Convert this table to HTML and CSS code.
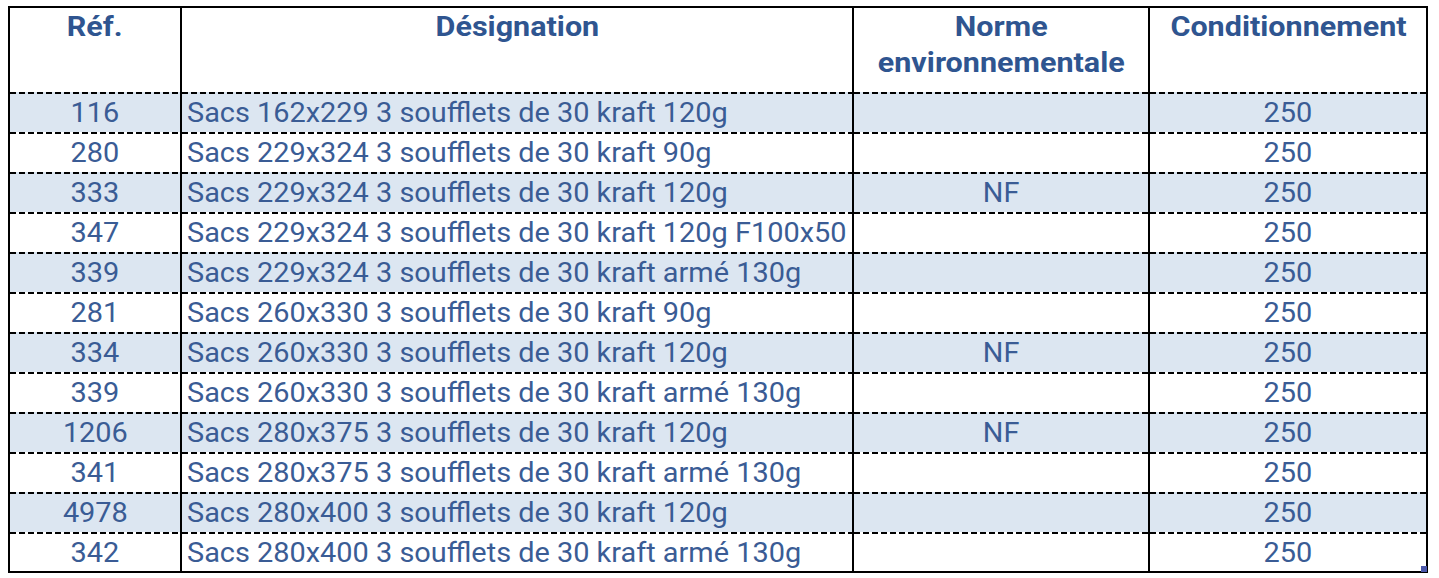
FILE: index.html
```html
<!DOCTYPE html>
<html lang="fr">
<head>
<meta charset="utf-8">
<title>Sacs 3 soufflets</title>
<link rel="stylesheet" href="styles.css">
</head>
<body>
<div class="wrap">
<table class="grid">
  <colgroup>
    <col class="c-ref"><col class="c-des"><col class="c-norme"><col class="c-cond">
  </colgroup>
  <thead>
    <tr>
      <th><span class="t">Réf.</span></th>
      <th><span class="t">Désignation</span></th>
      <th><span class="t">Norme<br>environnementale</span></th>
      <th><span class="t">Conditionnement</span></th>
    </tr>
  </thead>
  <tbody>
    <tr class="alt"><td><span class="t">116</span></td><td class="des"><span class="t">Sacs 162x229 3 soufflets de 30 kraft 120g</span></td><td></td><td><span class="t">250</span></td></tr>
    <tr><td><span class="t">280</span></td><td class="des"><span class="t">Sacs 229x324 3 soufflets de 30 kraft 90g</span></td><td></td><td><span class="t">250</span></td></tr>
    <tr class="alt"><td><span class="t">333</span></td><td class="des"><span class="t">Sacs 229x324 3 soufflets de 30 kraft 120g</span></td><td><span class="t">NF</span></td><td><span class="t">250</span></td></tr>
    <tr><td><span class="t">347</span></td><td class="des"><span class="t">Sacs 229x324 3 soufflets de 30 kraft 120g F100x50</span></td><td></td><td><span class="t">250</span></td></tr>
    <tr class="alt"><td><span class="t">339</span></td><td class="des"><span class="t">Sacs 229x324 3 soufflets de 30 kraft armé 130g</span></td><td></td><td><span class="t">250</span></td></tr>
    <tr><td><span class="t">281</span></td><td class="des"><span class="t">Sacs 260x330 3 soufflets de 30 kraft 90g</span></td><td></td><td><span class="t">250</span></td></tr>
    <tr class="alt"><td><span class="t">334</span></td><td class="des"><span class="t">Sacs 260x330 3 soufflets de 30 kraft 120g</span></td><td><span class="t">NF</span></td><td><span class="t">250</span></td></tr>
    <tr><td><span class="t">339</span></td><td class="des"><span class="t">Sacs 260x330 3 soufflets de 30 kraft armé 130g</span></td><td></td><td><span class="t">250</span></td></tr>
    <tr class="alt"><td><span class="t">1206</span></td><td class="des"><span class="t">Sacs 280x375 3 soufflets de 30 kraft 120g</span></td><td><span class="t">NF</span></td><td><span class="t">250</span></td></tr>
    <tr><td><span class="t">341</span></td><td class="des"><span class="t">Sacs 280x375 3 soufflets de 30 kraft armé 130g</span></td><td></td><td><span class="t">250</span></td></tr>
    <tr class="alt"><td><span class="t">4978</span></td><td class="des"><span class="t">Sacs 280x400 3 soufflets de 30 kraft 120g</span></td><td></td><td><span class="t">250</span></td></tr>
    <tr class="last"><td><span class="t">342</span></td><td class="des"><span class="t">Sacs 280x400 3 soufflets de 30 kraft armé 130g</span></td><td></td><td><span class="t">250</span></td></tr>
  </tbody>
</table>
<span class="handle"></span>
</div>
</body>
</html>
```

FILE: styles.css
```css
html, body {
  margin: 0;
  padding: 0;
  background: #ffffff;
}

.wrap {
  position: relative;
  width: 1420px;
  margin: 6px 0 0 8px;
}

.grid {
  width: 1420px;
  table-layout: fixed;
  border-collapse: separate;
  border-spacing: 0;
  border: 2px solid #000;
  font-family: Roboto, "Liberation Sans", Arial, sans-serif;
}

.c-ref { width: 170px; }
.c-des { width: 672px; }
.c-norme { width: 296px; }
.c-cond { width: 278px; }

.grid th,
.grid td {
  padding: 0;
  box-sizing: border-box;
  text-align: center;
  border-left: 2px solid #000;
  white-space: nowrap;
}

.grid th:first-child,
.grid td:first-child {
  border-left: none;
}

.t {
  display: inline-block;
  transform-origin: 50% 50%;
}

.grid th .t {
  transform: scaleX(1.13);
}

.grid td .t {
  transform: scaleX(1.07);
}

.grid th {
  height: 84px;
  vertical-align: top;
  font-size: 27px;
  font-weight: 700;
  line-height: 36px;
  color: #2f5590;
  padding-top: 1px;
}

.grid td {
  height: 40px;
  font-size: 27px;
  line-height: 36px;
  color: #3a5c95;
  vertical-align: top;
  padding-top: 3px;
  background-image: repeating-linear-gradient(to right, #000 0 6px, transparent 6px 9px);
  background-size: 100% 2px;
  background-repeat: no-repeat;
  background-position: 0 0;
}

.grid tr.alt td {
  background-color: #dce6f1;
}

.grid tr.last td {
  height: 36px;
}

.grid td.des {
  text-align: left;
  padding-left: 5px;
}

.grid td.des .t {
  transform-origin: 0 50%;
}

.handle {
  position: absolute;
  right: 1px;
  bottom: 1px;
  width: 6px;
  height: 6px;
  background: #4b57aa;
}
```
